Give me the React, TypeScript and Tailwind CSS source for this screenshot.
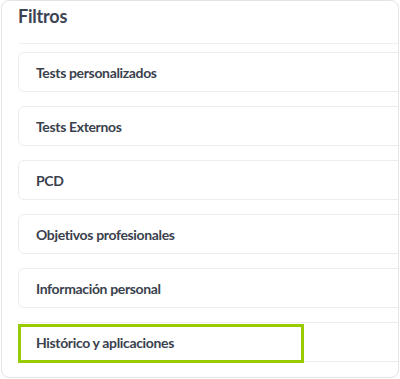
export default function App() {
  const items = [
    "Tests personalizados",
    "Tests Externos",
    "PCD",
    "Objetivos profesionales",
    "Información personal",
    "Histórico y aplicaciones",
  ];
  return (
    <div className="w-[400px] h-[379px] bg-white" style={{ fontFamily: "Lato, 'Noto Sans', sans-serif" }}>
      <div className="relative ml-[1px] w-[398px] h-[378px] rounded-lg border border-[#e4e4e4] overflow-hidden bg-white">
        <div className="pl-[16px] pt-[3px] h-[42px]">
          <h2 className="text-[18px] font-bold text-[#3c4452] leading-[24px] tracking-[-0.2px]">Filtros</h2>
        </div>
        <div className="ml-[17px] h-px bg-[#eeeeee]" />
        <div className="ml-[16px] w-[420px] pt-[8px] flex flex-col gap-[14px]">
          {items.map((t) => (
            <div key={t} className="h-[40px] rounded-[6px] border border-[#ededed] flex items-center pl-[17px]">
              <span className="text-[14px] font-bold text-[#3a414d] tracking-[-0.35px]">{t}</span>
            </div>
          ))}
        </div>
        <div className="absolute left-[16px] top-[323px] w-[286px] h-[39px] border-[3px] border-[#99cc00]" />
      </div>
    </div>
  );
}
